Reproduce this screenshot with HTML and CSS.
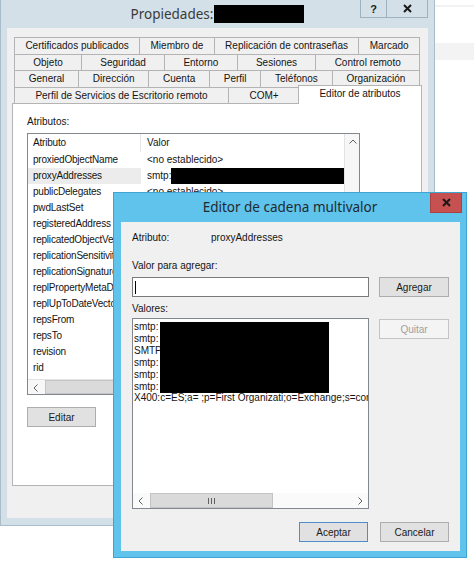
FILE: index.html
```html
<!DOCTYPE html>
<html lang="es">
<head>
<meta charset="utf-8">
<title>Propiedades</title>
<link rel="stylesheet" href="styles.css">
</head>
<body>
<div class="screen">
  <div class="win">
    <div class="titlebar">
      <div></div>
      <div class="title"><span>Propiedades:</span><span class="title-redact"></span></div>
      <div class="controls">
        <span class="ctl ctl-help">?</span>
        <span class="ctl ctl-close"><svg width="9" height="9" viewBox="0 0 9 9"><path d="M1 1 L8 8 M8 1 L1 8" stroke="#1a1a1a" stroke-width="2" fill="none"/></svg></span>
      </div>
    </div>
    <div class="body">
      <div class="tabs">
        <div class="tabrow">
          <span class="tab">Certificados publicados</span>
          <span class="tab">Miembro de</span>
          <span class="tab">Replicación de contraseñas</span>
          <span class="tab">Marcado</span>
        </div>
        <div class="tabrow">
          <span class="tab">Objeto</span>
          <span class="tab">Seguridad</span>
          <span class="tab">Entorno</span>
          <span class="tab">Sesiones</span>
          <span class="tab">Control remoto</span>
        </div>
        <div class="tabrow">
          <span class="tab">General</span>
          <span class="tab">Dirección</span>
          <span class="tab">Cuenta</span>
          <span class="tab">Perfil</span>
          <span class="tab">Teléfonos</span>
          <span class="tab">Organización</span>
        </div>
        <div class="tabrow">
          <span class="tab">Perfil de Servicios de Escritorio remoto</span>
          <span class="tab">COM+</span>
          <span class="tab sel">Editor de atributos</span>
        </div>
      </div>
      <div class="panel">
        <div class="lbl">Atributos:</div>
        <div class="alist">
          <div class="alist-main">
            <div class="arow ahead"><span class="c1">Atributo</span><span class="c2">Valor</span></div>
            <div class="arow"><span class="c1">proxiedObjectName</span><span class="c2">&lt;no establecido&gt;</span></div>
            <div class="arow hl"><span class="c1">proxyAddresses</span><span class="c2">smtp:<span class="row-redact"></span></span></div>
            <div class="arow"><span class="c1">publicDelegates</span><span class="c2">&lt;no establecido&gt;</span></div>
            <div class="arow"><span class="c1">pwdLastSet</span><span class="c2"></span></div>
            <div class="arow"><span class="c1">registeredAddress</span><span class="c2"></span></div>
            <div class="arow"><span class="c1">replicatedObjectVersion</span><span class="c2"></span></div>
            <div class="arow"><span class="c1">replicationSensitivity</span><span class="c2"></span></div>
            <div class="arow"><span class="c1">replicationSignature</span><span class="c2"></span></div>
            <div class="arow"><span class="c1">replPropertyMetaData</span><span class="c2"></span></div>
            <div class="arow"><span class="c1">replUpToDateVector</span><span class="c2"></span></div>
            <div class="arow"><span class="c1">repsFrom</span><span class="c2"></span></div>
            <div class="arow"><span class="c1">repsTo</span><span class="c2"></span></div>
            <div class="arow"><span class="c1">revision</span><span class="c2"></span></div>
            <div class="arow"><span class="c1">rid</span><span class="c2"></span></div>
          </div>
          <div class="vscroll">
            <span class="sbtn"><svg width="8" height="5" viewBox="0 0 8 5"><polyline points="0.5,4.5 4,1 7.5,4.5" fill="none" stroke="#606060"/></svg></span>
          </div>
          <div class="hscroll">
            <span class="sbtn"><svg width="5" height="8" viewBox="0 0 5 8"><polyline points="4.5,0.5 1,4 4.5,7.5" fill="none" stroke="#606060"/></svg></span>
            <span class="thumb main-thumb"></span>
          </div>
          <div class="corner"></div>
        </div>
        <div class="btn editar">Editar</div>
      </div>
    </div>
  </div>
  <div class="side">
    <div class="side-line"></div>
    <div class="side-band"></div>
  </div>

  <div class="dlg">
    <div class="dlg-title">
      <div></div>
      <div class="dlg-title-text">Editor de cadena multivalor</div>
      <div class="dlg-close"><svg width="9" height="9" viewBox="0 0 9 9"><path d="M1 1 L8 8 M8 1 L1 8" stroke="#1a1a1a" stroke-width="2" fill="none"/></svg></div>
    </div>
    <div class="client">
      <div class="attr"><span class="attr-k">Atributo:</span><span>proxyAddresses</span></div>
      <div class="l2">Valor para agregar:</div>
      <div class="inrow">
        <div class="input"><span class="caret"></span></div>
        <div class="btn">Agregar</div>
      </div>
      <div class="l3">Valores:</div>
      <div class="listrow">
        <div class="vlist">
          <div class="vitems">
            <div>smtp:</div>
            <div>smtp:</div>
            <div>SMTP:</div>
            <div>smtp:</div>
            <div>smtp:</div>
            <div>smtp:</div>
            <div>X400:c=ES;a= ;p=First Organizati;o=Exchange;s=cor</div>
          </div>
          <div class="vredact"></div>
          <div class="vh">
            <span class="sbtn"><svg width="5" height="8" viewBox="0 0 5 8"><polyline points="4.5,0.5 1,4 4.5,7.5" fill="none" stroke="#606060"/></svg></span>
            <span class="thumb dlg-thumb"><svg width="7" height="6" viewBox="0 0 7 6"><path d="M0.5 0 V6 M3.5 0 V6 M6.5 0 V6" stroke="#606060" stroke-width="1"/></svg></span>
            <span class="track"></span>
            <span class="sbtn"><svg width="5" height="8" viewBox="0 0 5 8"><polyline points="0.5,0.5 4,4 0.5,7.5" fill="none" stroke="#606060"/></svg></span>
          </div>
        </div>
        <div class="btn disabled">Quitar</div>
      </div>
      <div class="btnrow">
        <div class="btn default">Aceptar</div>
        <div class="btn">Cancelar</div>
      </div>
    </div>
  </div>
</div>
</body>
</html>
```

FILE: styles.css
```css
html, body {
  margin: 0;
  padding: 0;
  background: #ffffff;
}
body {
  font-family: "Liberation Sans", Arial, sans-serif;
  font-size: 10px;
  color: #141414;
}
.screen {
  position: relative;
  display: flex;
  width: 474px;
  height: 569px;
  overflow: hidden;
}

/* ---------- main window ---------- */
.win {
  flex: none;
  width: 435px;
  height: 526px;
  box-sizing: border-box;
  background: #d3e0e8;
  border: 1px solid #a9bcc7;
  border-top: 0;
  padding: 0 6px 7px;
  display: flex;
  flex-direction: column;
}
.titlebar {
  height: 28px;
  display: grid;
  grid-template-columns: 68px 1fr 68px;
}
.title {
  display: flex;
  align-items: center;
  justify-content: center;
  font-family: "Noto Sans", "Liberation Sans", sans-serif;
  font-size: 13.5px;
  color: #3a3a3a;
  padding-bottom: 1px;
}
.title-redact {
  width: 90px;
  height: 18px;
  background: #000;
  margin-left: 1px;
}
.controls {
  display: flex;
  align-items: flex-start;
}
.ctl {
  height: 18px;
  box-sizing: border-box;
  display: flex;
  align-items: center;
  justify-content: center;
  border: 1px solid #9fb2bd;
  border-top: 0;
  background: #d3e0e8;
  font-weight: bold;
  font-size: 11px;
  color: #1a1a1a;
}
.ctl-help { width: 27px; }
.ctl-close { width: 41px; border-left: 0; }

.body {
  flex: 1;
  background: #f0f0f0;
  padding: 9px 6px 0 5px;
}
.tabs { margin: 0 2px; }
.tabrow {
  display: flex;
  height: 16.5px;
}
.tab {
  flex: 1 1 auto;
  box-sizing: border-box;
  border: 1px solid #b4b4b4;
  border-left: 0;
  border-bottom: 0;
  background: #f0f0f0;
  text-align: center;
  line-height: 15px;
  white-space: nowrap;
}
.tab:first-child { border-left: 1px solid #b4b4b4; }
.tab.sel {
  position: relative;
  z-index: 1;
  background: #ffffff;
  margin: -2px -2px -1px;
  border-left: 1px solid #b4b4b4;
  line-height: 16px;
}

.panel {
  height: 383px;
  box-sizing: border-box;
  background: #ffffff;
  border: 1px solid #b4b4b4;
  padding: 12px 0 0 14px;
}
.lbl { line-height: 12px; }
.alist {
  margin-top: 5px;
  width: 333px;
  height: 262px;
  box-sizing: border-box;
  border: 1px solid #828790;
  display: grid;
  grid-template-columns: 1fr 15px;
  grid-template-rows: 1fr 15px;
}
.alist-main { overflow: hidden; }
.arow {
  display: flex;
  height: 16px;
  line-height: 16px;
  white-space: nowrap;
}
.ahead {
  height: 18px;
  line-height: 18px;
}
.c1 {
  flex: none;
  width: 113px;
  box-sizing: border-box;
  padding-left: 5px;
  overflow: hidden;
  letter-spacing: -0.2px;
}
.c2 {
  flex: 1;
  min-width: 0;
  display: flex;
  padding-left: 6px;
}
.ahead .c1 { border-right: 1px solid #e5e5e5; }
.hl .c1 { background: #ececec; }
.row-redact {
  flex: 1;
  background: #000;
}
.vscroll {
  background: #f7f7f7;
  border-left: 1px solid #e3e3e3;
}
.sbtn {
  flex: none;
  width: 15px;
  height: 15px;
  display: flex;
  align-items: center;
  justify-content: center;
}
.hscroll {
  display: flex;
  background: #f7f7f7;
  border-top: 1px solid #e3e3e3;
}
.thumb {
  box-sizing: border-box;
  background: #dadada;
  border: 1px solid #c4c4c4;
  display: flex;
  align-items: center;
  justify-content: center;
}
.main-thumb {
  margin-left: 2px;
  width: 200px;
}
.corner { background: #f0f0f0; }

.btn {
  box-sizing: border-box;
  height: 20px;
  background: #e1e1e1;
  border: 1px solid #adadad;
  display: flex;
  align-items: center;
  justify-content: center;
  color: #1a1a1a;
}
.btn.default { border-color: #4f8cc9; }
.btn.disabled {
  background: #f4f4f4;
  border-color: #c4c4c4;
  color: #a0a0a0;
}
.editar {
  margin-top: 12px;
  width: 69px;
}

/* ---------- background strip at right ---------- */
.side { flex: 1; }
.side-line {
  margin-top: 5px;
  height: 2px;
  background: #f2f2f2;
}
.side-band {
  margin-top: 36px;
  height: 17px;
  background: #f3f3f3;
}

/* ---------- dialog ---------- */
.dlg {
  position: absolute;
  left: 113px;
  top: 192px;
  width: 354px;
  height: 366px;
  box-sizing: border-box;
  background: #5fc3eb;
  border: 1px solid #3ea4d1;
  padding: 0 6px 6px 7px;
  display: flex;
  flex-direction: column;
}
.dlg-title {
  height: 29px;
  margin: 0 -6px 0 -7px;
  display: grid;
  grid-template-columns: 36px 1fr 36px;
}
.dlg-title-text {
  align-self: center;
  text-align: center;
  font-family: "Noto Sans", "Liberation Sans", sans-serif;
  font-size: 13.5px;
  color: #1f2a30;
  padding-bottom: 1px;
}
.dlg-close {
  justify-self: end;
  margin-right: 4px;
  width: 32px;
  height: 20px;
  box-sizing: border-box;
  background: #c75050;
  border: 1px solid #a94141;
  border-top: 0;
  display: flex;
  align-items: center;
  justify-content: center;
}
.client {
  flex: 1;
  background: #f0f0f0;
  padding: 10px 11px 0;
  display: flex;
  flex-direction: column;
}
.attr {
  display: flex;
  line-height: 12px;
}
.attr-k { width: 79px; }
.l2 {
  margin-top: 16px;
  line-height: 12px;
}
.inrow {
  margin-top: 5px;
  height: 20px;
  display: grid;
  grid-template-columns: 237px 70px;
  column-gap: 10px;
}
.input {
  box-sizing: border-box;
  background: #ffffff;
  border: 1px solid #7a7a7a;
  display: flex;
  align-items: center;
  padding-left: 2px;
}
.caret {
  width: 1px;
  height: 13px;
  background: #000;
}
.l3 {
  margin-top: 6px;
  line-height: 12px;
}
.listrow {
  margin-top: 3px;
  height: 191px;
  display: grid;
  grid-template-columns: 237px 70px;
  column-gap: 10px;
  align-items: start;
}
.listrow .btn.disabled { margin-top: 1px; }
.vlist {
  position: relative;
  height: 191px;
  box-sizing: border-box;
  background: #ffffff;
  border: 1px solid #828790;
  display: flex;
  flex-direction: column;
}
.vitems {
  flex: 1;
  padding: 2px 1px 0;
  line-height: 11.9px;
  white-space: nowrap;
  overflow: hidden;
}
.vredact {
  position: absolute;
  left: 27px;
  top: 3px;
  width: 169px;
  height: 71px;
  background: #000;
}
.vh {
  height: 15px;
  display: flex;
  background: #fafafa;
}
.dlg-thumb {
  margin-left: 2px;
  width: 123px;
}
.track { flex: 1; }
.btnrow {
  margin-top: 13px;
  display: flex;
  justify-content: flex-end;
  gap: 12px;
}
.btnrow .btn { width: 69px; }
```
